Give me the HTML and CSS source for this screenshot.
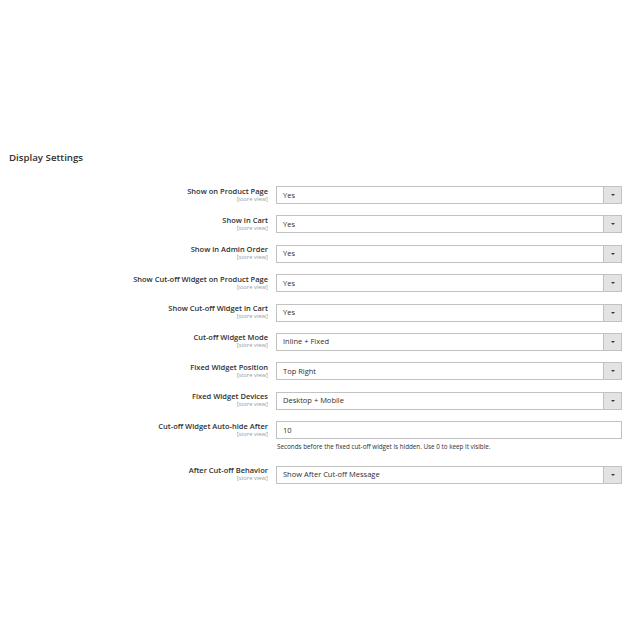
FILE: index.html
```html
<!DOCTYPE html>
<html lang="en">
<head>
<meta charset="utf-8">
<title>Display Settings</title>
<link rel="stylesheet" href="styles.css">
</head>
<body>
<section class="config-section">
  <h2 class="section-title">Display Settings</h2>
  <div class="fieldset">
    <div class="row">
      <div class="label"><span class="name">Show on Product Page</span><span class="scope">[store view]</span></div>
      <div class="control"><div class="select"><span class="value">Yes</span><span class="arrow"></span></div></div>
    </div>
    <div class="row">
      <div class="label"><span class="name">Show in Cart</span><span class="scope">[store view]</span></div>
      <div class="control"><div class="select"><span class="value">Yes</span><span class="arrow"></span></div></div>
    </div>
    <div class="row">
      <div class="label"><span class="name">Show in Admin Order</span><span class="scope">[store view]</span></div>
      <div class="control"><div class="select"><span class="value">Yes</span><span class="arrow"></span></div></div>
    </div>
    <div class="row">
      <div class="label"><span class="name">Show Cut-off Widget on Product Page</span><span class="scope">[store view]</span></div>
      <div class="control"><div class="select"><span class="value">Yes</span><span class="arrow"></span></div></div>
    </div>
    <div class="row">
      <div class="label"><span class="name">Show Cut-off Widget in Cart</span><span class="scope">[store view]</span></div>
      <div class="control"><div class="select"><span class="value">Yes</span><span class="arrow"></span></div></div>
    </div>
    <div class="row">
      <div class="label"><span class="name">Cut-off Widget Mode</span><span class="scope">[store view]</span></div>
      <div class="control"><div class="select"><span class="value">Inline + Fixed</span><span class="arrow"></span></div></div>
    </div>
    <div class="row">
      <div class="label"><span class="name">Fixed Widget Position</span><span class="scope">[store view]</span></div>
      <div class="control"><div class="select"><span class="value">Top Right</span><span class="arrow"></span></div></div>
    </div>
    <div class="row">
      <div class="label"><span class="name">Fixed Widget Devices</span><span class="scope">[store view]</span></div>
      <div class="control"><div class="select"><span class="value">Desktop + Mobile</span><span class="arrow"></span></div></div>
    </div>
    <div class="row">
      <div class="label"><span class="name">Cut-off Widget Auto-hide After</span><span class="scope">[store view]</span></div>
      <div class="control">
        <div class="input"><span class="value">10</span></div>
        <p class="note">Seconds before the fixed cut-off widget is hidden. Use 0 to keep it visible.</p>
      </div>
    </div>
    <div class="row">
      <div class="label"><span class="name">After Cut-off Behavior</span><span class="scope">[store view]</span></div>
      <div class="control"><div class="select"><span class="value">Show After Cut-off Message</span><span class="arrow"></span></div></div>
    </div>
  </div>
</section>
</body>
</html>
```
FILE: styles.css
```css
html, body {
  margin: 0;
  padding: 0;
  background: #fff;
}

body {
  font-family: "Open Sans", "Liberation Sans", sans-serif;
  color: #303030;
}

.config-section {
  padding: 151px 18px 0 9px;
}

.section-title {
  margin: 0;
  font-size: 9.7px;
  line-height: 14px;
  font-weight: 600;
  color: #303030;
}

.fieldset {
  margin-top: 21px;
  display: flex;
  flex-direction: column;
  gap: 11.4px;
}

.row {
  display: grid;
  grid-template-columns: 259px 1fr;
  column-gap: 8px;
}

.label {
  display: flex;
  flex-direction: column;
  align-items: flex-end;
  text-align: right;
  padding-top: 0.5px;
}

.label .name {
  font-size: 7.5px;
  line-height: 9px;
  font-weight: 600;
  color: #303030;
}

.label .scope {
  font-size: 5.8px;
  line-height: 6px;
  color: #9a9a9a;
}

.select,
.input {
  height: 18px;
  box-sizing: border-box;
  border: 1px solid #c2c2c2;
  background: #fff;
  display: flex;
  align-items: center;
}

.value {
  flex: 1;
  padding-left: 6px;
  font-size: 7.5px;
  line-height: 9px;
  color: #303030;
}

.arrow {
  align-self: stretch;
  width: 17px;
  background: #e3e3e3;
  border-left: 1px solid #c2c2c2;
  position: relative;
}

.arrow::after {
  content: "";
  position: absolute;
  left: 50%;
  top: 50%;
  margin: -1px 0 0 -2px;
  border-left: 2px solid transparent;
  border-right: 2px solid transparent;
  border-top: 2.5px solid #41362f;
}

.note {
  margin: 4px 0 3px;
  padding-left: 1px;
  font-size: 6.3px;
  line-height: 8px;
  color: #303030;
}
```
